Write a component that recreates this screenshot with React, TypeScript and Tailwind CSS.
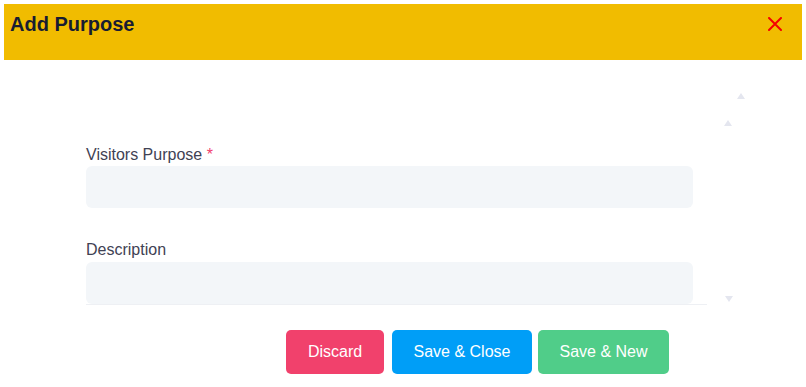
import React from "react";

function ScrollArrow({ down = false, className = "" }: { down?: boolean; className?: string }) {
    return (
        <svg width="8" height="6" viewBox="0 0 8 6" className={className}>
            {down ? <polygon points="0,0 8,0 4,6" fill="#e4e6ef" /> : <polygon points="4,0 8,6 0,6" fill="#e4e6ef" />}
        </svg>
    );
}

export default function App() {
    return (
        <div className="w-[806px] h-[387px] bg-white p-1 font-['Liberation_Sans',Arial,sans-serif]">
            <header className="h-14 bg-[#f1bc00] flex items-start justify-between pl-1.5 pt-1.5">
                <h1 className="text-[20px] leading-7 font-bold text-[#181c32]">Add Purpose</h1>
                <button className="mt-[7px] mr-[20px]" aria-label="Close">
                    <svg width="14" height="14" viewBox="0 0 14 14">
                        <path d="M1 1 L13 13 M13 1 L1 13" stroke="#f50000" strokeWidth="2" strokeLinecap="round" />
                    </svg>
                </button>
            </header>

            <section className="relative h-[245px] overflow-hidden">
                <div className="ml-[82px] w-[621px] h-[245px] border-b border-[#eef0f4] pt-[85px]">
                    <div className="w-[607px]">
                        <label className="block text-base leading-5 text-[#3f4254] mb-px">
                            Visitors Purpose <span className="text-[#f1416c]">*</span>
                        </label>
                        <input className="w-full h-[42px] rounded-md bg-[#f3f6f9] outline-none px-4" />

                        <label className="block text-base leading-5 text-[#3f4254] mt-[32px] mb-[2px]">Description</label>
                        <textarea className="w-full h-[42px] rounded-md bg-[#f3f6f9] outline-none px-4 resize-none" />
                    </div>
                </div>
                <ScrollArrow className="absolute left-[733px] top-[33px]" />
                <ScrollArrow className="absolute left-[720px] top-[60px]" />
                <ScrollArrow down className="absolute left-[721px] top-[236px]" />
            </section>

            <footer className="flex pt-[25px] pl-[282px]">
                <button className="w-[98px] h-11 rounded-[5px] bg-[#f1416c] text-white text-base">Discard</button>
                <button className="ml-2 w-[140px] h-11 rounded-[5px] bg-[#009ef7] text-white text-base">Save &amp; Close</button>
                <button className="ml-1.5 w-[131px] h-11 rounded-[5px] bg-[#50cd89] text-white text-base">Save &amp; New</button>
            </footer>
        </div>
    );
}
